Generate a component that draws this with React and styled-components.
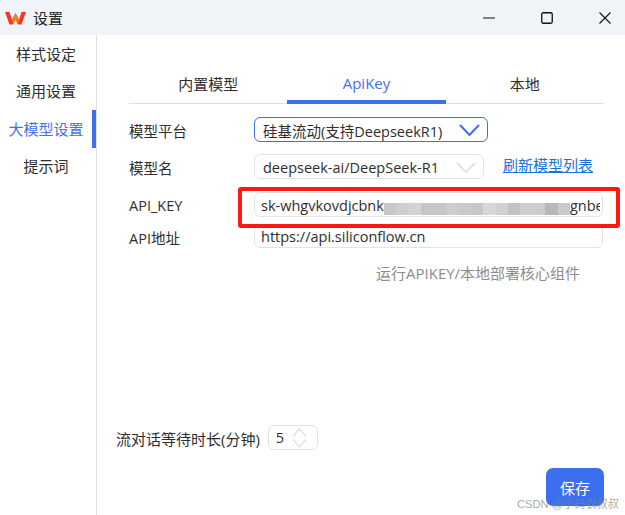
import React from 'react'
import styled, { createGlobalStyle } from 'styled-components'

const GlobalStyle = createGlobalStyle`
  html, body { margin: 0; padding: 0; background: #fff; }
  body { font-family: "Open Sans", "Noto Sans CJK SC", sans-serif; font-size: 14.5px; color: #2e2e2e; }
`

const Window = styled.div`
  position: relative;
  width: 625px;
  height: 515px;
  overflow: hidden;
  display: flex;
  flex-direction: column;
`

const TitleBar = styled.header`
  height: 35px;
  flex: none;
  display: flex;
  align-items: center;
  background: #f0f4f9;
  padding-left: 5px;
`

const AppTitle = styled.span`
  margin-left: 7px;
  font-size: 15px;
  color: #222;
`

const WindowButtons = styled.div`
  margin-left: auto;
  display: flex;
  margin-right: -9px;
`

const WindowButton = styled.button`
  width: 58px;
  height: 35px;
  border: 0;
  padding: 0;
  background: none;
  display: flex;
  align-items: center;
  justify-content: center;
`

const Body = styled.div`
  flex: 1;
  display: flex;
  min-height: 0;
`

const Sidebar = styled.nav`
  width: 96px;
  flex: none;
  border-right: 1px solid #dcdfe4;
  display: flex;
  flex-direction: column;
`

const NavItem = styled.div`
  height: 37.5px;
  box-sizing: border-box;
  display: flex;
  align-items: center;
  justify-content: center;
  padding-bottom: 1px;
  font-size: 15px;
  color: ${p => (p.$active ? '#4a70e8' : '#2e2e2e')};
  border-right: 4px solid ${p => (p.$active ? '#3f6fef' : 'transparent')};
  white-space: nowrap;
`

const Main = styled.main`
  flex: 1;
  display: flex;
  flex-direction: column;
  padding: 33px 21px 0 32px;
  min-width: 0;
`

const Tabs = styled.div`
  display: flex;
  border-bottom: 1px solid #e0e0e0;
`

const Tab = styled.div`
  flex: 1;
  height: 36px;
  box-sizing: border-box;
  display: flex;
  align-items: center;
  justify-content: center;
  padding-bottom: 2px;
  font-size: 15px;
  color: ${p => (p.$active ? '#4a70e8' : '#2e2e2e')};
  border-bottom: 4px solid ${p => (p.$active ? '#3f6fef' : 'transparent')};
  margin-bottom: -1px;
`

const Form = styled.div`
  display: flex;
  flex-direction: column;
  margin-top: 13px;
`

const Row = styled.div`
  display: flex;
  align-items: center;
  margin-top: ${p => p.$gap || 0}px;
`

const Label = styled.label`
  width: 125px;
  flex: none;
  padding-top: 2px;
`

const Field = styled.div`
  height: ${p => p.$height || 25}px;
  box-sizing: border-box;
  width: ${p => p.$width}px;
  flex: none;
  display: flex;
  align-items: center;
  justify-content: space-between;
  padding: ${p => p.$pad || '1px 8px 0'};
  border: 1px solid ${p => (p.$focus ? '#3f6fef' : '#e3e3e3')};
  border-radius: 6px;
  background: #fff;
  overflow: hidden;
  white-space: nowrap;
`

const InputRow = styled(Field)`
  justify-content: flex-start;
  padding: 1px 0 0 6px;
`

const Masked = styled.div`
  width: 186px;
  height: 12px;
  flex: none;
  margin-top: 8px;
  display: flex;
`

const MaskCell = styled.div`
  flex: 1;
  background: ${p => p.$color};
`

const KeyTail = styled.span`
  width: 30px;
  flex: none;
  overflow: hidden;
`

const Link = styled.a`
  margin: 0 0 4px 19px;
  color: #1a73d9;
  text-decoration: underline;
  font-size: 15px;
  white-space: nowrap;
`

const Status = styled.div`
  margin-top: 14px;
  padding-left: 247px;
  font-size: 15px;
  color: #8c8c8c;
  white-space: nowrap;
`

const Spacer = styled.div`
  flex: 1;
`

const WaitRow = styled.div`
  display: flex;
  align-items: center;
  margin-left: -13px;
  margin-bottom: 18px;
`

const WaitLabel = styled.span`
  margin-right: 8px;
  padding-top: 1px;
  font-size: 15px;
`

const SaveRow = styled.div`
  display: flex;
  justify-content: flex-end;
  height: 47px;
`

const SaveButton = styled.button`
  width: 58px;
  height: 38px;
  border: 0;
  border-radius: 7px;
  background: #3b6ff0;
  color: #fff;
  font: inherit;
  font-size: 15px;
  padding: 0;
`

const Highlight = styled.div`
  position: absolute;
  left: 238px;
  top: 187px;
  width: 382px;
  height: 41px;
  box-sizing: border-box;
  border: 4px solid #fa1a12;
  border-radius: 3px;
`

const Watermark = styled.div`
  position: absolute;
  right: 6px;
  bottom: 4px;
  font-family: "Liberation Sans", "Noto Sans CJK SC", sans-serif;
  font-size: 11.2px;
  color: rgba(130, 130, 130, 0.7);
  white-space: nowrap;
`

const Logo = () => (
  <svg width="21" height="14" viewBox="0 0 21 14">
    <path d="M0 1 H4.5 L7 9 L10.5 2 L14 9 L16.5 1 H21 L16.5 13.5 H13 L10.5 8.5 L8 13.5 H4.5 Z" fill="#f5371f" />
    <path d="M10.5 2 L14 9 L13 13.5 L10.5 8.5 L8 13.5 L7 9 Z" fill="#fb7a1c" />
  </svg>
)

const Chevron = ({ color = '#dcdcdc', width = 20, height = 11, sw = 1.6 }) => (
  <svg width={width} height={height} viewBox={`0 0 ${width} ${height}`}>
    <path d={`M1 1 L${width / 2} ${height - 1} L${width - 1} 1`} fill="none" stroke={color} strokeWidth={sw} />
  </svg>
)

const Stepper = () => (
  <svg width="15" height="20" viewBox="0 0 15 20">
    <path d="M1 8.5 L7.5 1 L14 8.5 M1 11.5 L7.5 19 L14 11.5" fill="none" stroke="#dedede" strokeWidth="1.2" />
  </svg>
)

const maskColors = ['#c8c8c8', '#cfcfcf', '#d6d2cc', '#c4c6c8', '#c6c6c6', '#d0cccc', '#c8cacc', '#cbc5c5', '#d5d9d8', '#cfd0d0', '#c3c3c3', '#d0cdc9', '#cbcdcd', '#b8b8b8', '#cacaca']

export default function App() {
  return (
    <Window>
      <GlobalStyle />
      <TitleBar>
        <Logo />
        <AppTitle>设置</AppTitle>
        <WindowButtons>
          <WindowButton>
            <svg width="12" height="2" viewBox="0 0 12 2"><path d="M0 1 H12" stroke="#111" strokeWidth="1" /></svg>
          </WindowButton>
          <WindowButton>
            <svg width="12" height="12" viewBox="0 0 12 12"><rect x="0.75" y="0.75" width="10.5" height="10.5" rx="1.5" fill="none" stroke="#111" strokeWidth="1.3" /></svg>
          </WindowButton>
          <WindowButton>
            <svg width="12" height="12" viewBox="0 0 12 12"><path d="M0.5 0.5 L11.5 11.5 M11.5 0.5 L0.5 11.5" stroke="#111" strokeWidth="1.1" /></svg>
          </WindowButton>
        </WindowButtons>
      </TitleBar>
      <Body>
        <Sidebar>
          <NavItem>样式设定</NavItem>
          <NavItem>通用设置</NavItem>
          <NavItem $active>大模型设置</NavItem>
          <NavItem>提示词</NavItem>
        </Sidebar>
        <Main>
          <Tabs>
            <Tab>内置模型</Tab>
            <Tab $active>ApiKey</Tab>
            <Tab>本地</Tab>
          </Tabs>
          <Form>
            <Row>
              <Label>模型平台</Label>
              <Field $width={234} $focus $pad="1px 7px 0 8px">
                <span>硅基流动(支持DeepseekR1)</span>
                <Chevron color="#3f6fef" width={21} height={12} sw={2} />
              </Field>
            </Row>
            <Row $gap={12}>
              <Label>模型名</Label>
              <Field $width={230} $pad="1px 7px 0 8px">
                <span>deepseek-ai/DeepSeek-R1</span>
                <Chevron />
              </Field>
              <Link>刷新模型列表</Link>
            </Row>
            <Row $gap={13}>
              <Label>API_KEY</Label>
              <InputRow $width={349}>
                <span>sk-whgvkovdjcbnk</span>
                <Masked>
                  {maskColors.map((c, i) => <MaskCell key={i} $color={c} />)}
                </Masked>
                <KeyTail>gnbe</KeyTail>
              </InputRow>
            </Row>
            <Row $gap={7}>
              <Label>API地址</Label>
              <InputRow $width={349} $height={24}>
                <span>https://api.siliconflow.cn</span>
              </InputRow>
            </Row>
          </Form>
          <Status>运行APIKEY/本地部署核心组件</Status>
          <Spacer />
          <WaitRow>
            <WaitLabel>流对话等待时长(分钟)</WaitLabel>
            <Field $width={50} $pad="0 10px 0 7px">
              <span>5</span>
              <Stepper />
            </Field>
          </WaitRow>
          <SaveRow>
            <SaveButton>保存</SaveButton>
          </SaveRow>
        </Main>
      </Body>
      <Highlight />
      <Watermark>CSDN @小码农叔叔</Watermark>
    </Window>
  )
}
